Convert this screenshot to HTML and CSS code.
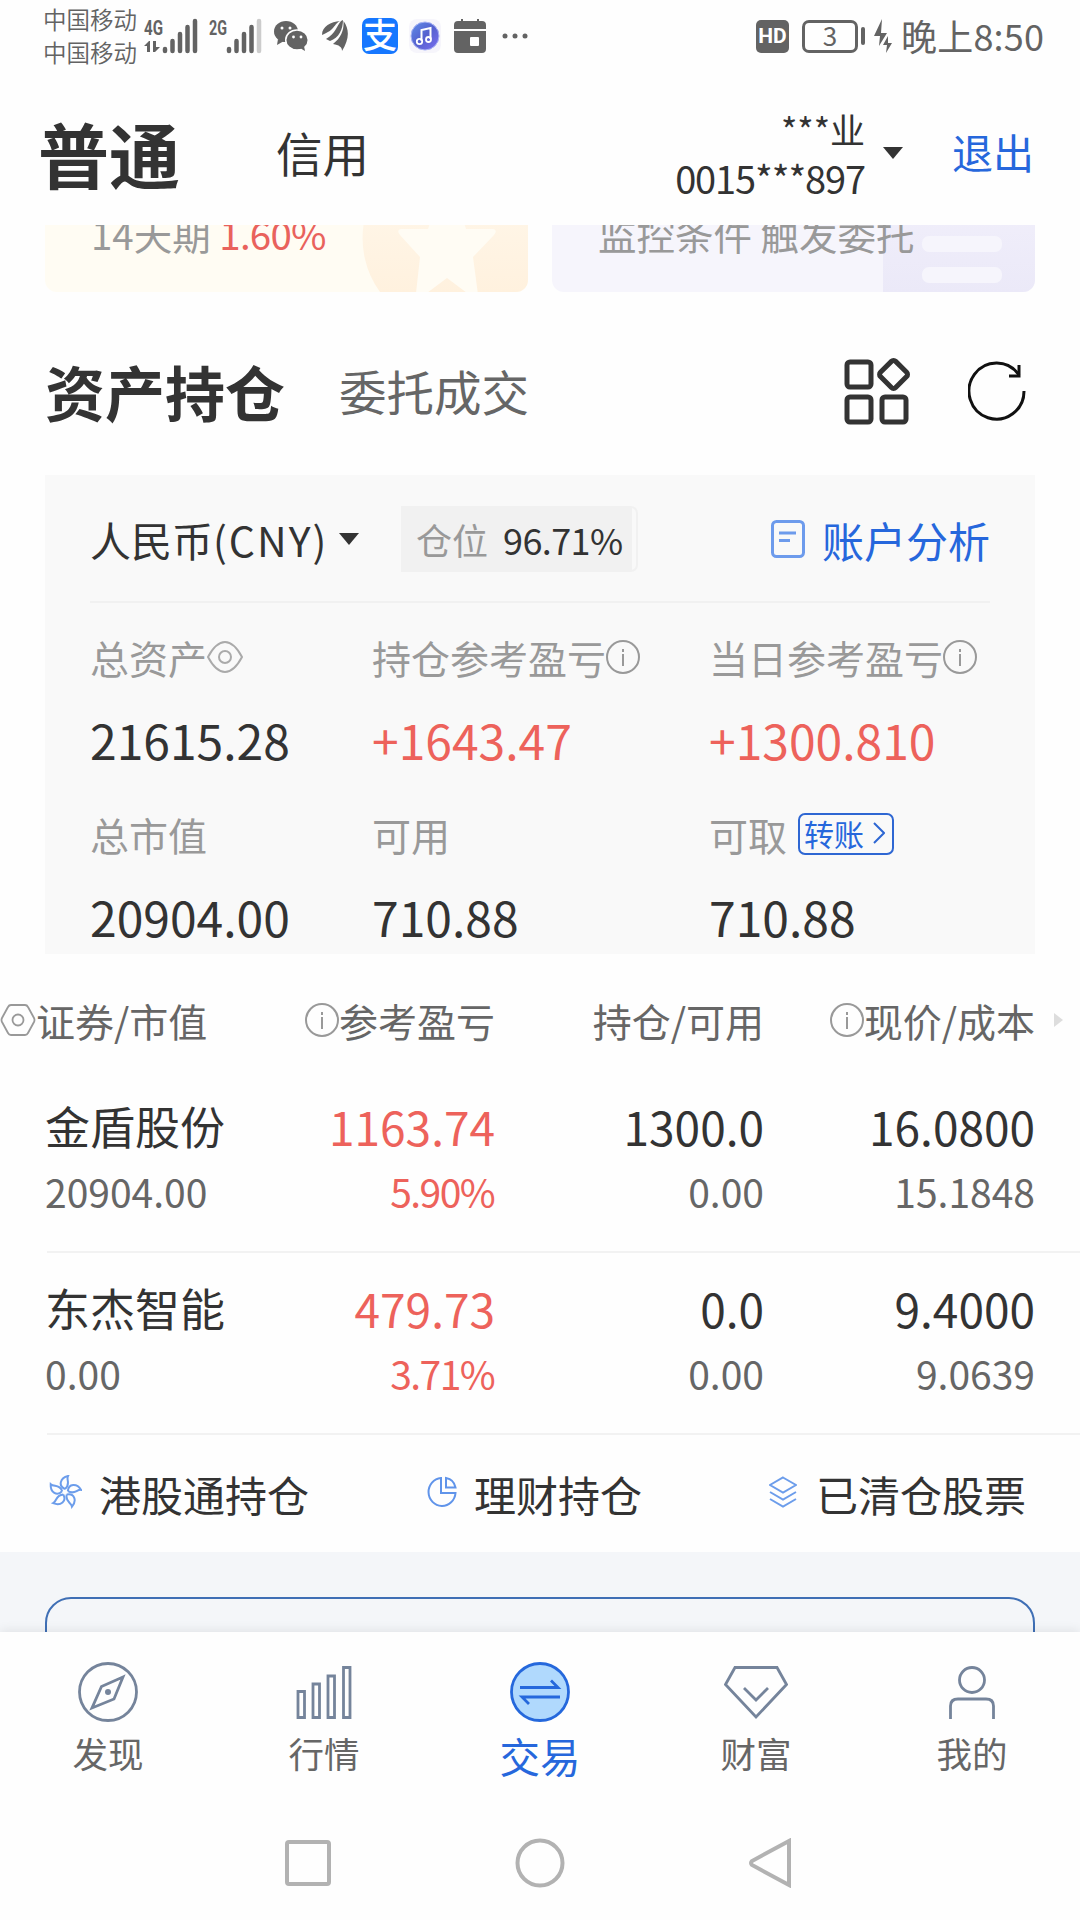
FILE: index.html
```
<!DOCTYPE html>
<html lang="zh-CN">
<head>
    <meta charset="UTF-8">
    <meta name="viewport" content="width=device-width, initial-scale=1.0">
    <title>交易</title>
    <link rel="stylesheet" href="styles.css">
</head>
<body>

    <!-- 系统状态栏 -->
    <div class="status-bar">
        <div class="carrier">
            <div>中国移动</div>
            <div>中国移动</div>
        </div>
        <svg class="signal" width="54" height="34" viewBox="0 0 54 34">
            <text x="0" y="15.500" textLength="19" lengthAdjust="spacingAndGlyphs">4G</text>
            <path d="M0 27l5-5h1v11H3v-6zM9 22h3v6h4l-5 5H9z" class="arrows"/>
            <path d="M21 30v2M28.500 22v10M36 15v17M43.500 8v24M51 2v30" class="bars"/>
        </svg>
        <svg class="signal second" width="53" height="34" viewBox="0 0 53 34">
            <text x="0" y="15.500" textLength="18" lengthAdjust="spacingAndGlyphs">2G</text>
            <path d="M20 30v2M27.500 22v10M35 15v17M42.500 8v24" class="bars"/>
            <path d="M50 2v30" class="bars off"/>
        </svg>
        <svg class="wechat" width="34" height="32" viewBox="0 0 34 32">
            <ellipse cx="12" cy="11.500" rx="12" ry="10.500" fill="#636363"/>
            <path d="M4 19l-1 6 7-4z" fill="#636363"/>
            <ellipse cx="23" cy="20" rx="11.300" ry="10" fill="#636363" stroke="#fff" stroke-width="1.500"/>
            <path d="M26 28l5 3-1-5z" fill="#636363"/>
            <g fill="#fff"><circle cx="8" cy="8" r="1.500"/><circle cx="16" cy="8" r="1.500"/><circle cx="19.500" cy="17" r="1.400"/><circle cx="27" cy="17" r="1.400"/></g>
        </svg>
        <svg class="wing" width="26" height="32" viewBox="0 0 26 32">
            <path d="M0 15C0 6 9 2 18 1C12 4 13 10 0 15zM4 19C14 13 14 7 19 1l2-1C21 9 17 18 8 21zM11 24C20 17 22 9 21.500 1C28 10 27 20 20 31C20 27 17 25 11 24z" fill="#636363"/>
        </svg>
        <div class="alipay">支</div>
        <svg class="music" width="32" height="34" viewBox="0 0 32 34">
            <defs>
                <linearGradient id="musicFill" x1="0" y1="0" x2="1" y2="1">
                    <stop offset="0" stop-color="#5f8de8"/><stop offset=".5" stop-color="#5561cf"/><stop offset="1" stop-color="#7c6ff0"/>
                </linearGradient>
            </defs>
            <rect width="32" height="34" rx="8" fill="#f6f5fb"/>
            <circle cx="16" cy="17" r="14" fill="url(#musicFill)" stroke="#a9b4f5" stroke-width="1"/>
            <path d="M12.500 22V11l9-2v11" fill="none" stroke="#fff" stroke-width="2"/>
            <circle cx="10.500" cy="22.500" r="2.700" fill="none" stroke="#fff" stroke-width="1.800"/><circle cx="19.500" cy="20.500" r="2.500" fill="none" stroke="#fff" stroke-width="1.800"/>
        </svg>
        <svg class="cal" width="32" height="34" viewBox="0 0 32 34">
            <path d="M0 10V6q0-4 4-4h24q4 0 4 4v4zM0 12h32v18q0 4-4 4H4q-4 0-4-4zM7 0h2v3H7zM23 0h2v3h-2z" fill="#636363"/>
            <rect x="16" y="18" width="9" height="9" rx="1" fill="#fff"/>
        </svg>
        <svg class="more" width="26" height="6" viewBox="0 0 26 6" fill="#636363">
            <circle cx="3" cy="3" r="2.500"/><circle cx="13" cy="3" r="2.500"/><circle cx="23" cy="3" r="2.500"/>
        </svg>
        <div class="status-right">
            <span class="hd">HD</span>
            <span class="battery">3</span>
            <span class="battery-tip"></span>
            <svg class="bolt" width="18" height="34" viewBox="0 0 18 34" fill="#636363">
                <path d="M8 0L0 17h6L5 27l8-13H7zM14 17L9 26h4l-1 8 6-10h-4z"/>
            </svg>
            <span class="clock">晚上8:50</span>
        </div>
    </div>

    <!-- 账户切换 -->
    <header class="account-bar">
        <div class="account-tab active">普通</div>
        <div class="account-tab">信用</div>
        <div class="account-info">
            <div class="account-name">***业</div>
            <div>0015***897</div>
        </div>
        <span class="caret"></span>
        <a class="logout">退出</a>
    </header>

    <!-- 滚动到一半的推广卡片 -->
    <section class="promos">
        <div class="promo gold">
            <svg class="promo-art" width="170" height="140" viewBox="-10 0 170 140">
                <defs>
                    <linearGradient id="goldFill" x1="0" y1="0" x2="0" y2="1">
                        <stop offset="0" stop-color="#fff9ee"/><stop offset="1" stop-color="#fff1de"/>
                    </linearGradient>
                </defs>
                <path d="M12 140A92 92 0 0 1 -4 70L20 0H160V140z" fill="url(#goldFill)"/>
                <path d="M79 20L98 77H125Q130 78 126 83L105 105L111 150L79 126L47 150L52 105L32 83Q28 78 33 77H60z" fill="#fffcf4"/>
            </svg>
            <p>14天期 <em>1.60%</em></p>
        </div>
        <div class="promo violet">
            <svg class="promo-art" width="152" height="140" viewBox="0 0 152 140">
                <defs>
                    <linearGradient id="violetFill" x1="0" y1="0" x2="0" y2="1">
                        <stop offset="0" stop-color="#f4f2fc"/><stop offset="1" stop-color="#ebe9f8"/>
                    </linearGradient>
                </defs>
                <rect width="152" height="140" fill="url(#violetFill)"/>
                <rect x="39" y="84" width="80" height="16" rx="7" fill="#f6f5fc"/>
                <rect x="39" y="115" width="80" height="16" rx="7" fill="#f6f5fc"/>
            </svg>
            <p>监控条件 触发委托</p>
        </div>
    </section>

    <div class="section-tabs">
        <h2>资产持仓</h2>
        <span class="tab-other">委托成交</span>
        <svg class="grid-icon" width="67" height="68" viewBox="0 0 67 68" fill="none" stroke="#333" stroke-width="5">
            <rect x="3" y="5" width="24" height="25" rx="3"/>
            <rect x="3" y="40" width="24" height="25" rx="3"/>
            <rect x="38" y="40" width="24" height="25" rx="3"/>
            <rect x="39.500" y="6" width="21.500" height="21.500" rx="3" transform="rotate(45 50.250 16.750) translate(0 1)"/>
        </svg>
        <svg class="reload-icon" width="58" height="60" viewBox="0 0 58 60" fill="none" stroke="#111" stroke-width="3">
            <path d="M56 30A27.500 28 0 1 1 51 14" />
            <path d="M51 4V15H41" />
        </svg>
    </div>

    <!-- 资产概览 -->
    <section class="assets">
        <div class="assets-top">
            <span class="currency">人民币<span class="code">(CNY)</span></span>
            <span class="caret"></span>
            <div class="position"><div class="position-fill"><span>仓位</span><b>96.71%</b></div></div>
            <a class="analysis">
                <svg width="34" height="38" viewBox="0 0 34 38" fill="none" stroke="#6d9bec" stroke-width="3">
                    <rect x="1.500" y="1.500" width="31" height="35" rx="4"/>
                    <path d="M8 13h17M8 20.500h11"/>
                </svg>
                账户分析
            </a>
        </div>
        <div class="assets-grid">
            <div class="cell">
                <div class="label">总资产<svg class="eye" width="36" height="32" viewBox="0 0 36 32" fill="none" stroke="#aaa" stroke-width="2">
                    <path d="M1 16Q9 1 18 1T35 16Q27 31 18 31T1 16z"/><circle cx="18" cy="16" r="6"/></svg></div>
                <div class="value">21615.28</div>
            </div>
            <div class="cell">
                <div class="label">持仓参考盈亏<svg class="info" width="34" height="34" viewBox="0 0 34 34"><circle cx="17" cy="17" r="16"/><path d="M17 9v3M17 14v12"/></svg></div>
                <div class="value up">+1643.47</div>
            </div>
            <div class="cell">
                <div class="label">当日参考盈亏<svg class="info" width="34" height="34" viewBox="0 0 34 34"><circle cx="17" cy="17" r="16"/><path d="M17 9v3M17 14v12"/></svg></div>
                <div class="value up">+1300.810</div>
            </div>
            <div class="cell">
                <div class="label">总市值</div>
                <div class="value">20904.00</div>
            </div>
            <div class="cell">
                <div class="label">可用</div>
                <div class="value">710.88</div>
            </div>
            <div class="cell">
                <div class="label">可取<a class="transfer">转账<svg width="12" height="22" viewBox="0 0 12 22"><path d="M1 1l10 10L1 21" fill="none" stroke="#2e67d3" stroke-width="2"/></svg></a></div>
                <div class="value">710.88</div>
            </div>
        </div>
    </section>

    <!-- 持仓列表 -->
    <section class="holdings">
        <div class="row head">
            <div><svg class="hex" width="36" height="34" viewBox="0 0 36 34" fill="none" stroke="#999" stroke-width="1.800"><path d="M11 2H25Q27 2 28 4L34 15Q35 17 34 19L28 30Q27 32 25 32H11Q9 32 8 30L2 19Q1 17 2 15L8 4Q9 2 11 2z"/><circle cx="18" cy="17" r="5.500"/></svg>证券/市值</div>
            <div><svg class="info" width="34" height="34" viewBox="0 0 34 34"><circle cx="17" cy="17" r="16"/><path d="M17 9v3M17 14v12"/></svg>参考盈亏</div>
            <div>持仓/可用</div>
            <div><svg class="info" width="34" height="34" viewBox="0 0 34 34"><circle cx="17" cy="17" r="16"/><path d="M17 9v3M17 14v12"/></svg>现价/成本</div>
            <span class="next"></span>
        </div>
        <div class="row stock">
            <div><p class="name">金盾股份</p><p class="sub">20904.00</p></div>
            <div class="up"><p>1163.74</p><p class="sub">5.90%</p></div>
            <div><p>1300.0</p><p class="sub">0.00</p></div>
            <div><p>16.0800</p><p class="sub">15.1848</p></div>
        </div>
        <div class="row stock">
            <div><p class="name">东杰智能</p><p class="sub">0.00</p></div>
            <div class="up"><p>479.73</p><p class="sub">3.71%</p></div>
            <div><p>0.0</p><p class="sub">0.00</p></div>
            <div><p>9.4000</p><p class="sub">9.0639</p></div>
        </div>
    </section>

    <div class="links">
        <a>
            <svg width="34" height="34" viewBox="-17 -17 34 34" fill="none" stroke="#6c9deb" stroke-width="2">
                <defs><path id="petal" d="M0 -3C-7 -6 -5 -14 3 -16C1 -12 6 -8 0 -3"/></defs>
                <use href="#petal"/><use href="#petal" transform="rotate(72)"/><use href="#petal" transform="rotate(144)"/><use href="#petal" transform="rotate(216)"/><use href="#petal" transform="rotate(288)"/>
            </svg>
            港股通持仓
        </a>
        <a class="wealth">
            <svg width="30" height="32" viewBox="0 0 30 32" fill="none" stroke="#6094ea" stroke-width="2">
                <path d="M14 2A13.500 14 0 1 0 28.500 17H14z"/>
                <path d="M19 2V11.500H28.500Q27 3.500 19 2z"/>
            </svg>
            理财持仓
        </a>
        <a class="cleared">
            <svg width="28" height="32" viewBox="0 0 28 32" fill="none" stroke="#6c9deb" stroke-width="2">
                <path d="M14 1.500L27 9L14 16.500L1 9zM1 16l13 7.500L27 16M1 23l13 7.500L27 23"/>
            </svg>
            已清仓股票
        </a>
    </div>

    <div class="below">
        <div class="outline-box"></div>
    </div>

    <!-- 底部导航 -->
    <nav class="tabbar">
        <a>
            <svg width="60" height="60" viewBox="0 0 60 60" fill="none" stroke="#75849b" stroke-width="2.800">
                <circle cx="30" cy="30" r="28.500"/>
                <path d="M45 15L23.500 24.500L14 46L36 37z"/><circle cx="30" cy="30" r="3" fill="#75849b" stroke="none"/>
            </svg>
            <span>发现</span>
        </a>
        <a>
            <svg width="60" height="60" viewBox="0 0 60 60" fill="none" stroke="#75849b" stroke-width="2.800">
                <path d="M4 29.500h6.500v26H4zM19 22h6.500v33.500H19zM34 14h6.500v41.500H34zM49.500 5.500H56v50H49.500z"/>
            </svg>
            <span>行情</span>
        </a>
        <a class="current">
            <svg width="60" height="60" viewBox="0 0 60 60" fill="none" stroke="#2568dc" stroke-width="2.800">
                <circle cx="30" cy="30" r="28.500" fill="#b0d9fd"/>
                <path d="M10 25.500H48L41 18.500M50 35H12L19 42"/>
            </svg>
            <span>交易</span>
        </a>
        <a>
            <svg width="64" height="60" viewBox="0 0 64 60" fill="none" stroke="#75849b" stroke-width="2.800">
                <path d="M11 5.500H53L62.500 22.500L32 55L1.500 22.500z"/><path d="M20 26L32 38L44 26"/>
            </svg>
            <span>财富</span>
        </a>
        <a>
            <svg width="60" height="60" viewBox="0 0 60 60" fill="none" stroke="#75849b" stroke-width="2.800">
                <circle cx="30" cy="18" r="12.500"/><path d="M8.500 57V44Q8.500 37 16 37H44Q51.500 37 51.500 44V57"/>
            </svg>
            <span>我的</span>
        </a>
    </nav>

    <div class="sys-nav">
        <svg width="46" height="50" viewBox="0 0 46 50"><rect x="2" y="4" width="42" height="42" rx="2"/></svg>
        <svg width="50" height="50" viewBox="0 0 50 50"><circle cx="25" cy="25" r="22.500"/></svg>
        <svg width="44" height="50" viewBox="0 0 44 50"><path d="M40 3V47L3 27Q1 25 3 23z"/></svg>
    </div>

</body>
</html>
```
FILE: styles.css
```
* {
    margin: 0;
    padding: 0;
    box-sizing: border-box;
}

body {
    width: 1080px;
    height: 1920px;
    overflow: hidden;
    background: #fefefe;
    color: #333;
    font-family: "Noto Sans CJK SC", sans-serif;
    display: flex;
    flex-direction: column;
}

svg {
    display: block;
    flex: none;
}

/* 状态栏 */
.status-bar {
    height: 76px;
    flex: none;
    display: flex;
    align-items: center;
    padding: 0 37px 4px 43px;
    color: #636363;
}

.carrier {
    width: 95px;
    margin-right: 6px;
    font-size: 23.5px;
    line-height: 33px;
    font-weight: 350;
    white-space: nowrap;
}

.signal {
    overflow: visible;
}

.signal text {
    font: bold 20.5px "Roboto", sans-serif;
    fill: #636363;
}

.signal .bars {
    stroke: #636363;
    stroke-width: 4.5;
    stroke-linecap: round;
}

.signal .bars.off {
    stroke: #ccc;
}

.signal .arrows {
    fill: #636363;
}

.signal.second {
    margin-left: 11px;
}

.wechat {
    margin-left: 12px;
}

.wing {
    margin-left: 14px;
}

.alipay {
    width: 36px;
    height: 36px;
    margin-left: 14px;
    border-radius: 7px;
    background: #1677ff;
    color: #fff;
    font-size: 34px;
    line-height: 32px;
    font-weight: 500;
    text-align: center;
}

.music {
    margin-left: 11px;
}

.cal {
    margin-left: 13px;
}

.more {
    margin-left: 16px;
}

.status-right {
    margin-left: auto;
    display: flex;
    align-items: center;
}

.hd {
    width: 33px;
    height: 33px;
    border-radius: 5px;
    background: #636363;
    color: #fff;
    font: bold 21px/33px "Roboto", sans-serif;
    text-align: center;
}

.battery {
    width: 56px;
    height: 33px;
    margin-left: 13px;
    border: 3px solid #636363;
    border-radius: 7px;
    font-size: 26px;
    line-height: 24px;
    text-align: center;
}

.battery-tip {
    width: 4px;
    height: 18px;
    margin-left: 3px;
    border-radius: 2px;
    background: #636363;
}

.bolt {
    margin: 0 9px;
}

.clock {
    width: 142px;
    padding-bottom: 2px;
    font-size: 36px;
    line-height: 36px;
    letter-spacing: 0.2px;
    white-space: nowrap;
}

/* 账户栏 */
.account-bar {
    height: 149px;
    flex: none;
    display: flex;
    align-items: center;
    padding: 0 46px 0 38px;
}

.account-tab {
    width: 238px;
    padding-top: 3px;
    font-size: 46.5px;
    line-height: 60px;
}

.account-tab.active {
    padding-top: 2px;
    font-size: 71px;
    font-weight: 700;
}

.account-info {
    margin-left: auto;
    padding-top: 4px;
    font-size: 38px;
    line-height: 49px;
    letter-spacing: -1.1px;
    text-align: right;
}

.account-name {
    font-size: 35px;
    letter-spacing: 0;
}

.caret {
    border: 10px solid transparent;
    border-top: 12px solid #333;
    border-bottom: 0;
}

.account-bar .caret {
    margin: 5px 49px 0 18px;
}

.logout {
    padding-top: 1px;
    font-size: 41px;
    color: #2667dc;
}

/* 推广卡片，上半部分被顶栏遮住 */
.promos {
    height: 67px;
    flex: none;
    overflow: hidden;
    display: flex;
    align-items: flex-end;
    gap: 24px;
    padding: 0 45px;
}

.promo {
    position: relative;
    flex: 1;
    height: 140px;
    border-radius: 12px;
    overflow: hidden;
    font-size: 38.5px;
    color: #999;
}

.promo p {
    position: relative;
    padding: 53px 0 0 46px;
    line-height: 56px;
}

.promo em {
    font-style: normal;
    letter-spacing: -0.8px;
    color: #e9625c;
}

.promo.gold {
    background: #fffcf3;
}

.promo.violet {
    background: #f6f5fc;
}

.promo-art {
    position: absolute;
    right: 0;
    top: 0;
}

/* 资产持仓标题行 */
.section-tabs {
    height: 183px;
    flex: none;
    display: flex;
    align-items: center;
    padding: 15px 54px 0 45px;
}

.section-tabs h2 {
    font-size: 60px;
    line-height: 80px;
    font-weight: 700;
}

.tab-other {
    margin-left: 54px;
    font-size: 47.5px;
    line-height: 70px;
    color: #666;
}

.grid-icon {
    margin-left: auto;
}

.reload-icon {
    margin-left: 57px;
}

/* 资产面板 */
.assets {
    height: 479px;
    flex: none;
    margin: 0 45px;
    padding: 0 45px;
    background: #f9f9f9;
}

.assets-top {
    height: 128px;
    display: flex;
    align-items: center;
    border-bottom: 2px solid #f1f1f1;
    padding-top: 2px;
}

.currency {
    font-size: 41px;
    line-height: 60px;
}

.currency .code {
    letter-spacing: 2px;
}

.assets-top .caret {
    margin-left: 11px;
}

.position {
    width: 237px;
    height: 66px;
    margin-left: auto;
    margin-right: 133px;
    border: 2px solid #f1f1f1;
    border-radius: 0 7px 7px 0;
}

.position-fill {
    width: 229px;
    height: 62px;
    display: flex;
    align-items: center;
    padding-left: 13px;
    background: #f1f1f1;
    font-size: 36px;
    color: #999;
}

.position-fill b {
    margin-left: 15px;
    font-weight: 400;
    letter-spacing: -0.6px;
    color: #333;
}

.analysis {
    display: flex;
    align-items: center;
    gap: 17px;
    font-size: 42px;
    color: #2667dc;
}

.assets-grid {
    display: grid;
    grid-template-columns: 282px 337px 281px;
    grid-auto-rows: 177px;
    padding-top: 26px;
}

.label {
    height: 56px;
    display: flex;
    align-items: center;
    font-size: 39px;
    line-height: 56px;
    color: #999;
    white-space: nowrap;
}

.label .eye {
    margin-left: 0;
}

.info {
    fill: none;
    stroke: #999;
    stroke-width: 2;
}

.value {
    margin-top: 19px;
    font-size: 48px;
    line-height: 70px;
}

.up,
.up .sub {
    color: #ed625b;
}

.transfer {
    display: flex;
    align-items: center;
    justify-content: space-between;
    width: 96px;
    height: 42px;
    margin-left: 11px;
    padding: 0 7px 2px 4px;
    border: 2px solid #2e67d3;
    border-radius: 7px;
    font-size: 30px;
    line-height: 38px;
    color: #2667dc;
}

/* 持仓表 */
.holdings {
    flex: none;
    padding-top: 33px;
}

.row {
    display: grid;
    text-align: right;
}

.row > div:first-child {
    text-align: left;
}

.row.head {
    height: 65px;
    grid-template-columns: 245px 250px 269px 271px 28px;
    align-items: center;
    font-size: 39px;
    color: #666;
}

.row.head > div {
    display: flex;
    align-items: center;
    justify-content: flex-end;
    white-space: nowrap;
}

.row.head > div:first-child {
    justify-content: flex-start;
}

.next {
    justify-self: end;
    border: 7px solid transparent;
    border-left: 9px solid #ddd;
    border-right: 0;
}

.row.stock {
    height: 182px;
    margin-left: 47px;
    padding-top: 20px;
    grid-template-columns: 198px 250px 269px 271px;
    border-bottom: 2px solid #f2f2f2;
    font-size: 46px;
    line-height: 70px;
}

.row.head + .stock {
    height: 201px;
    padding-top: 39px;
}

.row .name {
    margin-left: -2px;
    font-size: 45px;
}

.row .sub {
    font-size: 39px;
    line-height: 61px;
    color: #666;
}

.row > div:first-child .sub {
    margin-left: -2px;
}

.row .up .sub {
    letter-spacing: -1.6px;
    padding-right: 1px;
    color: #ed625b;
}

/* 快捷入口 */
.links {
    height: 117px;
    flex: none;
    display: flex;
    align-items: center;
    padding: 0 54px 0 48px;
    font-size: 42px;
}

.links a {
    display: flex;
    align-items: center;
    gap: 17px;
}

.links .wealth {
    margin-left: 118px;
}

.links .cleared {
    margin-left: auto;
    gap: 19px;
}

.links a svg {
    margin-bottom: 3px;
}

.below {
    height: 80px;
    flex: none;
    overflow: hidden;
    padding: 45px 45px 0;
    background: #f4f6f9;
}

.outline-box {
    height: 100px;
    border: 2px solid #3f6fb5;
    border-radius: 26px;
}

/* 底部导航 */
.tabbar {
    position: relative;
    height: 168px;
    flex: none;
    display: flex;
    padding-top: 30px;
    background: #fefefe;
    box-shadow: 0 -2px 10px rgba(0, 0, 0, 0.08);
}

.tabbar a {
    flex: 1;
    display: flex;
    flex-direction: column;
    align-items: center;
    font-size: 35.5px;
    line-height: 62px;
    color: #666;
}

.tabbar .current {
    font-size: 40.5px;
    line-height: 68px;
    color: #2667dc;
}

.sys-nav {
    position: relative;
    height: 120px;
    flex: none;
    display: flex;
    justify-content: center;
    gap: 184px;
    padding: 38px 2px 0 0;
    background: #fefefe;
    fill: none;
    stroke: #b2b2b2;
    stroke-width: 4;
}
```
